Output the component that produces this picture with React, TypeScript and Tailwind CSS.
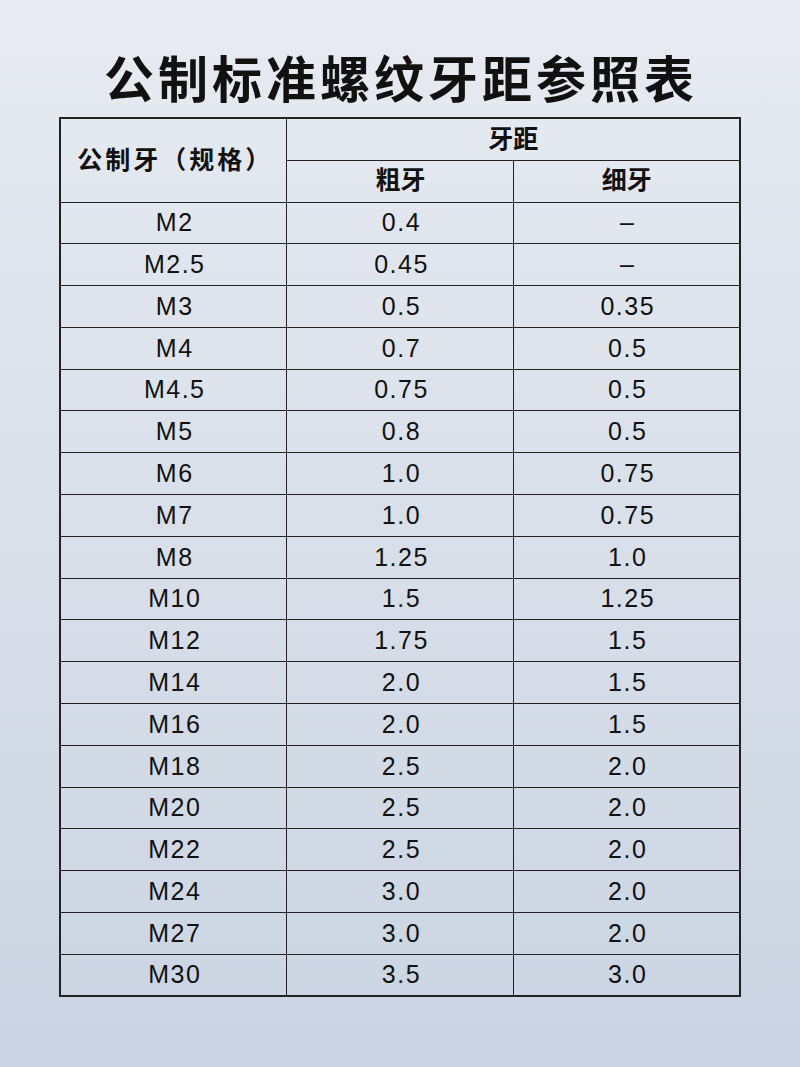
import React from 'react';

const rows: [string, string, string][] = [
  ['M2', '0.4', '–'],
  ['M2.5', '0.45', '–'],
  ['M3', '0.5', '0.35'],
  ['M4', '0.7', '0.5'],
  ['M4.5', '0.75', '0.5'],
  ['M5', '0.8', '0.5'],
  ['M6', '1.0', '0.75'],
  ['M7', '1.0', '0.75'],
  ['M8', '1.25', '1.0'],
  ['M10', '1.5', '1.25'],
  ['M12', '1.75', '1.5'],
  ['M14', '2.0', '1.5'],
  ['M16', '2.0', '1.5'],
  ['M18', '2.5', '2.0'],
  ['M20', '2.5', '2.0'],
  ['M22', '2.5', '2.0'],
  ['M24', '3.0', '2.0'],
  ['M27', '3.0', '2.0'],
  ['M30', '3.5', '3.0'],
];

const font = { fontFamily: '"Liberation Sans", "Noto Sans CJK SC", sans-serif' };

function App() {
  return (
    <div
      className="w-[800px] h-[1067px] bg-gradient-to-b from-[#e8ebf1] to-[#cad4e2] pt-[55px]"
      style={font}
    >
      {/* Title */}
      <h1 className="text-center text-[50px] leading-[52px] font-bold tracking-[4px] text-[#111] pl-[2px]">
        公制标准螺纹牙距参照表
      </h1>

      <table className="mt-[10px] mx-auto w-[680px] border-collapse border-2 border-[#222] text-[#111] table-fixed">
        <colgroup>
          <col className="w-[227px]" />
          <col className="w-[227px]" />
          <col className="w-[226px]" />
        </colgroup>
        <thead>
          <tr className="h-[42px]">
            <th
              rowSpan={2}
              className="border-[1.5px] border-[#222] text-[25px] font-semibold tracking-[3px] pl-[3px]"
            >
              公制牙（规格）
            </th>
            <th colSpan={2} className="border-[1.5px] border-[#222] text-[25px] font-semibold">
              牙距
            </th>
          </tr>
          <tr className="h-[42px]">
            <th className="border-[1.5px] border-[#222] text-[25px] font-semibold">粗牙</th>
            <th className="border-[1.5px] border-[#222] text-[25px] font-semibold">细牙</th>
          </tr>
        </thead>
        <tbody>
          {rows.map(([spec, coarse, fine]) => (
            <tr key={spec} className="h-[41.8px]">
              <td className="border-[1.5px] border-[#222] text-center text-[25px] tracking-[1.5px] pl-[2px]">
                {spec}
              </td>
              <td className="border-[1.5px] border-[#222] text-center text-[25px] tracking-[1.5px] pl-[2px]">
                {coarse}
              </td>
              <td className="border-[1.5px] border-[#222] text-center text-[25px] tracking-[1.5px] pl-[2px]">
                {fine}
              </td>
            </tr>
          ))}
        </tbody>
      </table>
    </div>
  );
}

export default App;
